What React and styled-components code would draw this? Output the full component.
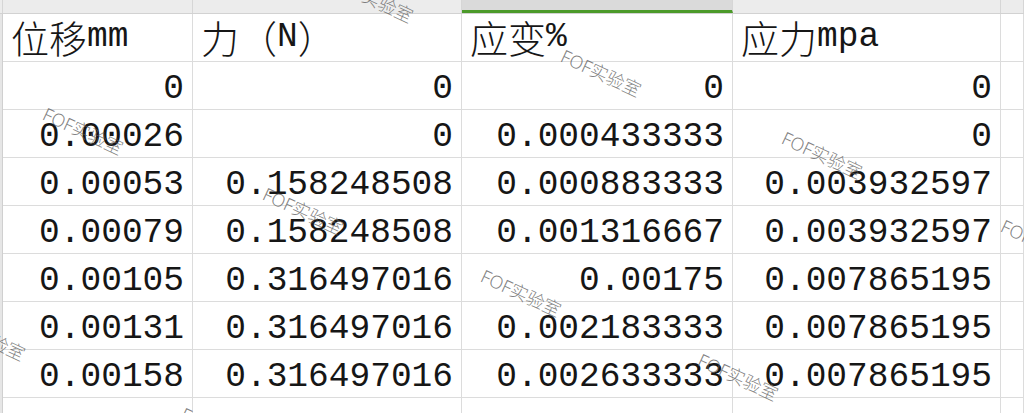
import styled, { createGlobalStyle } from "styled-components";

const GlobalStyle = createGlobalStyle`
  html, body {
    margin: 0;
    padding: 0;
    background: #ffffff;
    overflow: hidden;
  }
`;

const Sheet = styled.div`
  position: relative;
  width: 1024px;
  height: 413px;
  overflow: hidden;
  background: #ffffff;
`;

const COLS = "3px 190px 269px 271px 268px 1fr";

const HeadBar = styled.div`
  display: grid;
  grid-template-columns: ${COLS};
  height: 14px;
  box-sizing: border-box;
  border-bottom: 1px solid #d2d2d2;
`;

const HeadCell = styled.div`
  background: ${(p) => (p.$active ? "#dadada" : "#ececec")};
  border-right: 1px solid #d6d6d6;
  box-sizing: border-box;
  border-bottom: ${(p) => (p.$active ? "3px solid #4c9a2a" : "none")};
`;

const Grid = styled.div`
  display: grid;
  grid-template-columns: ${COLS};
  grid-auto-rows: 48px;
`;

const Gutter = styled.div`
  background: #e6e6e6;
  border-right: 1px solid #d0d0d0;
`;

const Cell = styled.div`
  display: flex;
  align-items: center;
  justify-content: ${(p) => (p.$head ? "flex-start" : "flex-end")};
  box-sizing: border-box;
  padding: ${(p) => (p.$head ? "0 0 2px 8px" : "6px 8px 0 0")};
  border-right: 1px solid #dcdcdc;
  border-bottom: 1px solid #dcdcdc;
  font-family: "Liberation Mono", "Noto Sans CJK SC", monospace;
  font-size: 34.5px;
  line-height: 40px;
  color: #161616;
  white-space: nowrap;
`;

const Han = styled.span`
  font-family: "Noto Sans CJK SC", sans-serif;
  font-size: 38px;
  font-weight: 300;
  line-height: 40px;
`;

const Mark = styled.div`
  position: absolute;
  transform: rotate(25deg);
  transform-origin: left top;
  font-family: "Noto Sans", "Noto Sans CJK SC", sans-serif;
  font-size: 18px;
  font-weight: 300;
  color: rgba(90, 90, 90, 0.75);
  white-space: nowrap;
  pointer-events: none;
`;

const headers = [
  [<Han key="a">位移</Han>, "mm"],
  [<Han key="a">力（</Han>, "N", <Han key="b">）</Han>],
  [<Han key="a">应变</Han>, "%"],
  [<Han key="a">应力</Han>, "mpa"],
];

const rows = [
  ["0", "0", "0", "0"],
  ["0.00026", "0", "0.000433333", "0"],
  ["0.00053", "0.158248508", "0.000883333", "0.003932597"],
  ["0.00079", "0.158248508", "0.001316667", "0.003932597"],
  ["0.00105", "0.316497016", "0.00175", "0.007865195"],
  ["0.00131", "0.316497016", "0.002183333", "0.007865195"],
  ["0.00158", "0.316497016", "0.002633333", "0.007865195"],
  ["", "", "", ""],
];

const marks = [
  [340, -32],
  [50, 100],
  [568, 42],
  [789, 124],
  [270, 180],
  [1008, 212],
  [488, 262],
  [-48, 306],
  [705, 346],
  [188, 400],
];

export default function App() {
  return (
    <Sheet>
      <GlobalStyle />
      <HeadBar>
        <HeadCell />
        <HeadCell />
        <HeadCell />
        <HeadCell $active />
        <HeadCell />
        <HeadCell />
      </HeadBar>
      <Grid>
        <Gutter />
        {headers.map((h, i) => (
          <Cell $head key={i}>
            {h}
          </Cell>
        ))}
        <Cell />
        {rows.map((r, i) => [
          <Gutter key={"g" + i} />,
          ...r.map((v, j) => <Cell key={i + "-" + j}>{v}</Cell>),
          <Cell key={"e" + i} />,
        ])}
      </Grid>
      {marks.map(([x, y], i) => (
        <Mark key={i} style={{ left: x, top: y }}>
          FOF实验室
        </Mark>
      ))}
    </Sheet>
  );
}
